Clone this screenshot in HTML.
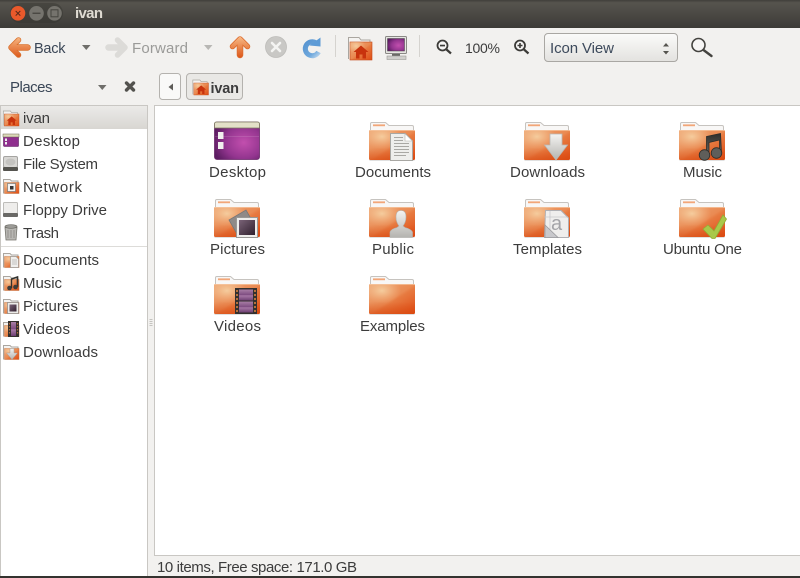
<!DOCTYPE html>
<html><head><meta charset="utf-8"><style>
html,body{margin:0;padding:0;width:800px;height:578px;overflow:hidden;background:#f2f1ef}
svg{display:block}
text{font-family:"Liberation Sans",sans-serif;font-size:15px;fill:#3c3c3c}
</style></head><body>
<svg width="800" height="578" viewBox="0 0 800 578" xmlns="http://www.w3.org/2000/svg">
<defs>
<linearGradient id="title" x1="0" y1="0" x2="0" y2="1"><stop offset="0" stop-color="#403f3b"/><stop offset=".1" stop-color="#56544e"/><stop offset="1" stop-color="#3c3b37"/></linearGradient>
<linearGradient id="sel" x1="0" y1="0" x2="0" y2="1"><stop offset="0" stop-color="#ebeae8"/><stop offset="1" stop-color="#d8d6d2"/></linearGradient>
<linearGradient id="combo" x1="0" y1="0" x2="0" y2="1"><stop offset="0" stop-color="#fbfbfa"/><stop offset="1" stop-color="#e3e2df"/></linearGradient>
<linearGradient id="fb" x1="0" y1="0" x2="1" y2="1"><stop offset="0" stop-color="#eea877"/><stop offset=".5" stop-color="#ea8a52"/><stop offset=".56" stop-color="#e77a40"/><stop offset="1" stop-color="#df4c14"/></linearGradient>
<radialGradient id="fh" cx=".28" cy=".22" r=".42"><stop offset="0" stop-color="#f6d2a4" stop-opacity=".9"/><stop offset="1" stop-color="#f4c090" stop-opacity="0"/></radialGradient>
<linearGradient id="fv" x1="0" y1="0" x2="0" y2="1"><stop offset=".6" stop-color="#d8480f" stop-opacity="0"/><stop offset="1" stop-color="#d8480f" stop-opacity=".6"/></linearGradient>
<radialGradient id="desk" cx=".65" cy=".55" r=".7"><stop offset="0" stop-color="#c24fae"/><stop offset=".6" stop-color="#93358f"/><stop offset="1" stop-color="#5c1d62"/></radialGradient>
<linearGradient id="ao" gradientUnits="userSpaceOnUse" x1="0" y1="38" x2="0" y2="57"><stop offset="0" stop-color="#f6b37e"/><stop offset="1" stop-color="#dd5a1c"/></linearGradient>
<linearGradient id="gr" x1="0" y1="0" x2="0" y2="1"><stop offset="0" stop-color="#f4f4f2"/><stop offset="1" stop-color="#b4b3af"/></linearGradient>
<linearGradient id="blue" gradientUnits="userSpaceOnUse" x1="303" y1="38" x2="320" y2="57"><stop offset="0" stop-color="#4f8ecd"/><stop offset=".7" stop-color="#6fa8dc"/><stop offset="1" stop-color="#c6dcf0"/></linearGradient>
<linearGradient id="mov" x1="0" y1="0" x2="0" y2="1"><stop offset="0" stop-color="#a97ea6"/><stop offset=".5" stop-color="#7d4c80"/><stop offset=".55" stop-color="#a878a6"/><stop offset="1" stop-color="#6d3f72"/></linearGradient>
<linearGradient id="ph" x1="0" y1="0" x2="1" y2="1"><stop offset="0" stop-color="#7a6377"/><stop offset="1" stop-color="#30202e"/></linearGradient>
<linearGradient id="note" x1="0" y1="0" x2="0" y2="1"><stop offset="0" stop-color="#2f2e2b"/><stop offset="1" stop-color="#6a6965"/></linearGradient>

<symbol id="folder" viewBox="0 0 46 39" overflow="visible">
<path d="M1.500 9V1.800Q1.500.5 2.800.5H16.500L20 3.500H43Q44.500 3.500 44.500 5V9Z" fill="#f8f7f6" stroke="#c6c3bf"/>
<rect x="4" y="2.400" width="12" height="1.800" fill="#f2a678"/>
<rect x=".5" y="37" width="45" height="2" fill="#000" opacity=".12"/>
<rect x="0" y="8" width="46" height="30" rx="1.500" fill="url(#fb)"/>
<rect x="0" y="8" width="46" height="30" rx="1.500" fill="url(#fh)"/>
<rect x="0" y="8" width="46" height="30" rx="1.500" fill="url(#fv)"/>
<rect x="0" y="8" width="46" height="1" fill="#f6c7a2" opacity=".7"/>
</symbol>

<symbol id="homeb" viewBox="0 0 24 24" overflow="visible">
<path d="M.5 23V1.500H11L13 4H22V9" fill="#f4f3f1" stroke="#aaa6a0"/>
<rect x="2" y="6" width="22" height="18" fill="url(#fb)" stroke="#c2491a" stroke-width=".6"/>
<rect x="2" y="6" width="22" height="18" fill="url(#fh)"/>
<path d="M13 9.500L5.500 16H8V22.500H11.500V18.500H14.500V22.500H18V16H20.500Z" fill="#c8330d"/>
</symbol>

<symbol id="sfold" viewBox="0 0 16 16" overflow="visible">
<path d="M.5 15.500V1.500H7L8.500 3H15V6" fill="#f4f3f1" stroke="#aaa6a0"/>
<rect x="1.500" y="4.500" width="14.500" height="11" fill="url(#fb)" stroke="#c2703e" stroke-width=".5"/>
<rect x="1.500" y="4.500" width="14.500" height="11" fill="url(#fh)"/>
</symbol>
</defs>

<!-- title bar -->
<rect x="0" y="0" width="800" height="28" fill="url(#title)"/>
<rect x="10" y="3" width="53" height="20" rx="10" fill="#33322e" opacity=".4"/>
<circle cx="18" cy="13.300" r="7.300" fill="#e9592b"/>
<path d="M15.700 11l4.600 4.600M20.300 11l-4.600 4.600" stroke="#5a2a1a" stroke-width="1"/>
<circle cx="36.500" cy="13.300" r="7.300" fill="#75736d"/>
<rect x="32.500" y="12.600" width="8" height="1.300" fill="#45443f"/>
<circle cx="54.500" cy="13.300" r="7.300" fill="#75736d"/>
<rect x="51" y="9.800" width="7" height="7" fill="none" stroke="#45443f" stroke-width="1"/>
<text x="75" y="18" textLength="28" style="fill:#dfdbd2;font-weight:700">ivan</text>

<!-- toolbar -->
<rect x="0" y="28" width="800" height="550" fill="#f2f1ef"/>
<path d="M18.500 40L11 47.500L18.500 55" fill="none" stroke="#d9722f" stroke-width="5.500" stroke-linecap="round" stroke-linejoin="round"/>
<path d="M13 47.500H27.500" stroke="#d9722f" stroke-width="6.500" stroke-linecap="round"/>
<path d="M18.500 40L11 47.500L18.500 55" fill="none" stroke="url(#ao)" stroke-width="4" stroke-linecap="round" stroke-linejoin="round"/>
<path d="M13 47.500H27.500" stroke="url(#ao)" stroke-width="5" stroke-linecap="round"/>
<text x="34" y="53" textLength="31.500" style="font-size:14.500px;fill:#3a4656">Back</text>
<path d="M82 45h8.500l-4.250 5z" fill="#6f6e6a"/>
<path d="M117.500 40L125 47.500L117.500 55" fill="none" stroke="#dcdbd8" stroke-width="5.500" stroke-linecap="round" stroke-linejoin="round"/>
<path d="M123 47.500H108.500" stroke="#dcdbd8" stroke-width="6.500" stroke-linecap="round"/>
<text x="132" y="53" textLength="56" style="fill:#9a9a98">Forward</text>
<path d="M204 45h8.500l-4.250 5z" fill="#b8b7b4"/>
<path d="M232.500 46.500L240 39L247.500 46.500" fill="none" stroke="#dc6a2c" stroke-width="5.500" stroke-linecap="round" stroke-linejoin="round"/>
<path d="M240 41V55" stroke="#dc6a2c" stroke-width="6.500" stroke-linecap="round"/>
<path d="M232.500 46.500L240 39L247.500 46.500" fill="none" stroke="url(#ao)" stroke-width="4" stroke-linecap="round" stroke-linejoin="round"/>
<path d="M240 41V55" stroke="url(#ao)" stroke-width="5" stroke-linecap="round"/>
<circle cx="276" cy="47" r="10.500" fill="#c9c8c5" stroke="#bdbcb9" stroke-width=".8"/>
<path d="M272 43l8 8M280 43l-8 8" stroke="#f4f4f2" stroke-width="2.600" stroke-linecap="round"/>
<path d="M316 42.800A7 7 0 1 0 318.500 52" fill="none" stroke="url(#blue)" stroke-width="5"/>
<path d="M309.500 45.500L320.500 37.500V46.500Z" fill="#5d9bd6"/>
<rect x="335" y="35" width="1" height="22" fill="#d5d3cf"/>
<use href="#homeb" x="348" y="36" width="24" height="24"/>
<rect x="385.500" y="36.500" width="21" height="17" rx="1" fill="#e6e5e2" stroke="#8a8985"/>
<rect x="387.500" y="38.500" width="17" height="12.500" fill="url(#desk)" stroke="#444" stroke-width=".5"/>
<rect x="392" y="54" width="8" height="2" fill="#6a6966"/>
<rect x="387" y="56" width="19" height="3.500" fill="#d0cfcc" stroke="#9a9995" stroke-width=".6"/>
<rect x="419" y="35" width="1" height="22" fill="#d5d3cf"/>
<circle cx="442.500" cy="45.500" r="5" fill="#f7f6f5" stroke="#3c3b38" stroke-width="1.800"/>
<path d="M446.500 49.500L451 53.500" stroke="#3c3b38" stroke-width="2.200"/>
<rect x="440" y="44.700" width="5" height="1.700" fill="#3c3b38"/>
<text x="465" y="53" textLength="35" style="font-size:14px">100%</text>
<circle cx="520" cy="45.500" r="5" fill="#f7f6f5" stroke="#3c3b38" stroke-width="1.800"/>
<path d="M524 49.500L528.500 53.500" stroke="#3c3b38" stroke-width="2.200"/>
<path d="M517.500 45.500h5M520 43v5" stroke="#3c3b38" stroke-width="1.600"/>
<rect x="544.500" y="33.500" width="133" height="28" rx="3.500" fill="url(#combo)" stroke="#a9a7a3"/>
<text x="550" y="53" textLength="64" style="fill:#3d4a5c">Icon View</text>
<path d="M663 46.500l3-3.500 3 3.500zM663 51l3 3.500 3-3.500z" fill="#55544f"/>
<circle cx="698.500" cy="45" r="6.500" fill="#f7f6f5" stroke="#44433f" stroke-width="1.600"/>
<path d="M703.500 50L711.500 56" stroke="#44433f" stroke-width="2.400" stroke-linecap="round"/>

<!-- location row -->
<text x="10" y="92" textLength="42.500" style="fill:#3a4656">Places</text>
<path d="M98 85h8.500l-4.250 5z" fill="#6f6e6a"/>
<path d="M126.500 83l7 7M133.500 83l-7 7" stroke="#53524e" stroke-width="3.400" stroke-linecap="round"/>
<rect x="159.500" y="73.500" width="21" height="26" rx="3" fill="#f9f9f8" stroke="#b4b2ae"/>
<path d="M173 83.500v7l-4.500-3.500z" fill="#5d5c58"/>
<rect x="186.500" y="73.500" width="56" height="26" rx="3.500" fill="#e9e8e5" stroke="#b4b2ae"/>
<use href="#homeb" x="192.500" y="79" width="16" height="16"/>
<text x="210.500" y="93" textLength="28.500" style="font-weight:700;font-size:14.500px">ivan</text>

<!-- sidebar -->
<rect x="0.500" y="105.500" width="147" height="471" fill="#fff" stroke="#c9c7c3"/>
<rect x="1" y="106" width="146" height="23" fill="url(#sel)"/>
<rect x="1" y="246" width="146" height="1" fill="#dddcd9"/>

<use href="#homeb" x="3" y="110" width="16" height="16"/>
<text x="23" y="123" textLength="27">ivan</text>

<rect x="3.500" y="134.500" width="15" height="12" rx="1" fill="#8f2f8e" stroke="#5c2060" stroke-width=".6"/>
<rect x="3" y="134" width="16" height="3" fill="#dcd9b9" stroke="#6a6650" stroke-width=".5"/>
<rect x="5" y="138.500" width="2" height="2.500" fill="#eee"/><rect x="5" y="142" width="2" height="2.500" fill="#eee"/>
<text x="23" y="146" textLength="57">Desktop</text>

<rect x="3.500" y="156.500" width="14" height="11" rx="1.500" fill="#d8d7d4" stroke="#a5a4a1"/>
<rect x="3" y="167" width="15" height="4" rx="1" fill="#55544f"/>
<ellipse cx="10.500" cy="162" rx="5" ry="3.500" fill="#c4c3c0"/>
<text x="23" y="169" textLength="75">File System</text>

<use href="#sfold" x="3" y="178" width="16" height="16"/>
<rect x="7.500" y="183.500" width="8" height="8" fill="#f2f1ef" stroke="#777" stroke-width=".7"/>
<rect x="10" y="186" width="3.500" height="3.500" fill="#333"/>
<text x="23" y="192" textLength="59">Network</text>

<rect x="3.500" y="202.500" width="14" height="11" rx="1" fill="#eeedeb" stroke="#bdbcb9"/>
<rect x="3" y="213" width="15" height="4" rx="1" fill="#6a6966"/>
<text x="23" y="215" textLength="84">Floppy Drive</text>

<path d="M5 227.500H17L16 240H6Z" fill="#b8b7b3" stroke="#77766f" stroke-width=".8"/>
<ellipse cx="11" cy="226.500" rx="6" ry="1.800" fill="#9d9c98" stroke="#66655f" stroke-width=".7"/>
<path d="M8 230v8M11 230v8M14 230v8" stroke="#8a8985" stroke-width=".8"/>
<text x="23" y="238" textLength="36">Trash</text>

<use href="#sfold" x="3" y="252" width="16" height="16"/>
<path d="M10.500 256.500H16L18.500 259V267.500H10.500Z" fill="#f0efed" stroke="#9c9b97" stroke-width=".7"/>
<path d="M12 260h5M12 262h5M12 264h5" stroke="#b3b2ae" stroke-width=".7"/>
<text x="23" y="265" textLength="76">Documents</text>

<use href="#sfold" x="3" y="275" width="16" height="16"/>
<path d="M11.500 279L17.500 277V287" fill="none" stroke="#33322e" stroke-width="1.600"/>
<circle cx="9.500" cy="288" r="2.300" fill="#3e3d39"/><circle cx="15.500" cy="287" r="2.300" fill="#3e3d39"/>
<path d="M11.500 278.500V288" stroke="#33322e" stroke-width="1.400"/>
<text x="23" y="288" textLength="39">Music</text>

<use href="#sfold" x="3" y="298" width="16" height="16"/>
<rect x="7.500" y="302.500" width="11" height="11" fill="#ecebe8" stroke="#888" stroke-width=".7"/>
<rect x="9.500" y="304.500" width="7" height="7" fill="url(#ph)"/>
<text x="23" y="311" textLength="55">Pictures</text>

<use href="#sfold" x="3" y="321" width="16" height="16"/>
<rect x="8" y="321" width="11" height="16" fill="#34302d"/>
<rect x="11" y="322" width="5" height="14" fill="url(#mov)"/>
<path d="M9.500 323v12M17.500 323v12" stroke="#b06a3a" stroke-width="1.200" stroke-dasharray="1.500 1.500"/>
<text x="23" y="334" textLength="47">Videos</text>

<use href="#sfold" x="3" y="344" width="16" height="16"/>
<path d="M10 348.500h4V353h3.500L12 359.500 6.500 353H10Z" fill="url(#gr)" stroke="#a3a29f" stroke-width=".5"/>
<text x="23" y="357" textLength="75">Downloads</text>

<!-- paned handle -->
<path d="M149.500 319.500h3M149.500 321.500h3M149.500 323.500h3M149.500 325.500h3" stroke="#c5c4c0" stroke-width="1"/>

<!-- main view -->
<rect x="154.500" y="105.500" width="650" height="450" fill="#fff" stroke="#c9c7c3"/>

<!-- Desktop -->
<rect x="214.500" y="122" width="45" height="37.500" rx="2.500" fill="url(#desk)" stroke="#6a2a6a" stroke-width=".8"/>
<path d="M214.500 128V124Q214.500 122 216.500 122H257.500Q259.500 122 259.500 124V128Z" fill="#e3e0c8" stroke="#7c7860" stroke-width=".8"/>
<rect x="218" y="132" width="5.500" height="7" fill="#f1f0ee"/>
<rect x="218" y="142" width="5.500" height="7" fill="#f1f0ee"/>
<rect x="215" y="136" width="44" height="1" fill="#fff" opacity=".12"/>
<text x="209" y="177" textLength="57">Desktop</text>

<!-- Documents -->
<use href="#folder" x="369" y="122" width="46" height="39"/>
<path d="M390.500 133.500H405L412.500 141V160.500H390.500Z" fill="#eeeeec" stroke="#a8a7a3"/>
<path d="M405 133.500V141H412.500Z" fill="#fff" stroke="#b2b1ad" stroke-width=".6"/>
<path d="M394 137.500h9M394 140.500h9M394 143.500h15M394 146.500h15M394 149.500h15M394 152.500h15M394 155.500h12" stroke="#a9a8a4" stroke-width="1"/>
<text x="355" y="177" textLength="76">Documents</text>

<!-- Downloads -->
<use href="#folder" x="524" y="122" width="46" height="39"/>
<path d="M550 134H562V145H567.500L556 160L544.500 145H550Z" fill="url(#gr)" stroke="#b9b8b5" stroke-width=".8"/>
<text x="510" y="177" textLength="75">Downloads</text>

<!-- Music -->
<use href="#folder" x="679" y="122" width="46" height="39"/>
<path d="M706.500 136.500L720.500 133.500L721.500 153L719.500 153V140L709 142.500V155H706.500Z" fill="url(#note)" stroke="#2e2d2a" stroke-width=".8"/>
<circle cx="704.500" cy="155" r="5.300" fill="#5f5e5a" stroke="#2e2d2a" stroke-width=".8"/>
<circle cx="716.500" cy="153" r="5.300" fill="#5f5e5a" stroke="#2e2d2a" stroke-width=".8"/>
<text x="683" y="177" textLength="39">Music</text>

<!-- Pictures -->
<use href="#folder" x="214" y="199" width="46" height="39"/>
<path d="M229 220L246 210L254 224L237 234Z" fill="#8f8a88" stroke="#777" stroke-width=".8"/>
<rect x="236.500" y="217.500" width="21" height="20" fill="#eeedeb" stroke="#999895"/>
<rect x="239" y="220" width="16" height="15" fill="url(#ph)"/>
<text x="210" y="254" textLength="55">Pictures</text>

<!-- Public -->
<use href="#folder" x="369" y="199" width="46" height="39"/>
<path d="M390 237.500V232Q391 229 397 227.500L399 226Q396 222 396 217Q396 210.500 401 210.500T406 217Q406 222 403 226L405 227.500Q411 229 412.500 232V237.500Z" fill="url(#gr)" stroke="#b3b2ae" stroke-width=".6"/>
<text x="372" y="254" textLength="42">Public</text>

<!-- Templates -->
<use href="#folder" x="524" y="199" width="46" height="39"/>
<path d="M545.500 210.500H561L568.500 218V237.500H544.500Z" fill="#efeeed" stroke="#b0b0b4"/>
<path d="M550 211V237M544.500 217H568" stroke="#c8c8cc" stroke-width=".8"/>
<text x="551" y="230" style="font-size:20px;fill:#a4a4a8">a</text>
<path d="M545 225L558 237.500H545Z" fill="#c8c8cc" stroke="#9a9a9e" stroke-width=".8"/>
<text x="513" y="254" textLength="69">Templates</text>

<!-- Ubuntu One -->
<use href="#folder" x="679" y="199" width="46" height="39"/>
<path d="M703 229L708 225L714 231L723 215L726.500 219L715 238.500H712Z" fill="#a9c84a" stroke="#92ad35" stroke-width=".8"/>
<text x="663" y="254" textLength="79">Ubuntu One</text>

<!-- Videos -->
<use href="#folder" x="214" y="276" width="46" height="39"/>
<rect x="235" y="288" width="22" height="26" fill="#33302e"/>
<rect x="239" y="289.500" width="14" height="11" fill="url(#mov)"/>
<rect x="239" y="301.500" width="14" height="11" fill="url(#mov)"/>
<path d="M237 290V313M255 290V313" stroke="#b4703c" stroke-width="2" stroke-dasharray="2 2"/>
<text x="214" y="331" textLength="47">Videos</text>

<!-- Examples -->
<use href="#folder" x="369" y="276" width="46" height="39"/>
<text x="360" y="331" textLength="65">Examples</text>

<!-- status -->
<text x="157" y="572" textLength="200">10 items, Free space: 171.0 GB</text>
<rect x="0" y="576" width="800" height="2" fill="#34332f"/>
</svg>
</body></html>
